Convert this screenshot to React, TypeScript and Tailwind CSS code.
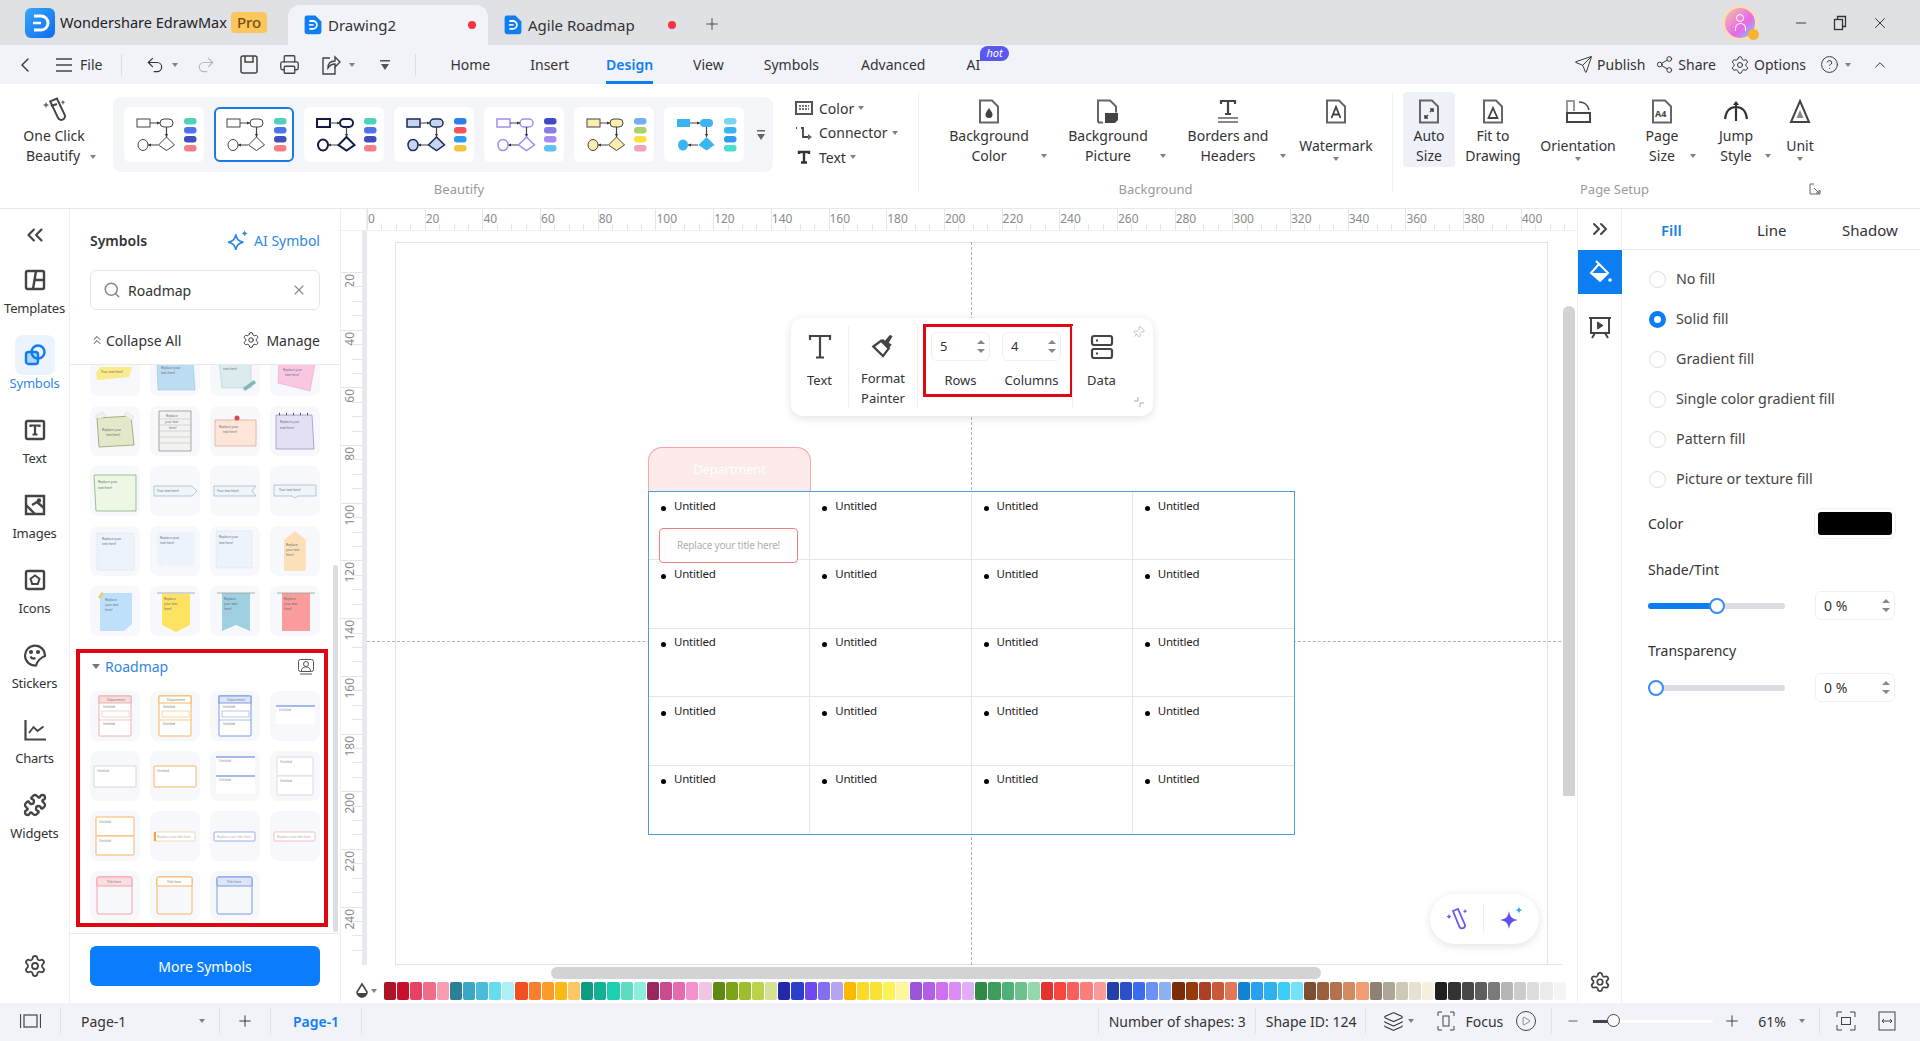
import type { ReactNode } from 'react';
import {
  ChevronLeft, ChevronUp, ChevronsLeft, ChevronsRight, Undo2, Redo2, Printer, Send, Share2,
  Settings, CircleHelp, Search, X, Minus, Plus, Pin, Layers, Play, Puzzle, ChevronsUp,
} from 'lucide-react';

const Caret = ({ className = '' }: { className?: string }) => (
  <span className={`inline-block w-0 h-0 border-x-[3.5px] border-x-transparent border-t-[4px] border-t-[#808080] ${className}`} />
);

const AppLogo = () => (
  <svg width="30" height="30" viewBox="0 0 30 30">
    <defs>
      <linearGradient id="lg" x1="0" y1="0" x2="1" y2="1"><stop offset="0" stopColor="#39a7f8" /><stop offset="1" stopColor="#0b6cf0" /></linearGradient>
    </defs>
    <rect width="30" height="30" rx="6" fill="url(#lg)" />
    <path d="M9 8h7a7 7 0 0 1 0 14H9" fill="none" stroke="#fff" strokeWidth="3" />
    <path d="M8 15h8" stroke="#fff" strokeWidth="2.500" />
  </svg>
);

const Logo = ({ size }: { size: number }) => (
  <svg width={size} height={size * 1.1} viewBox="0 0 30 33">
    <path d="M5 1h14l10 10v17a4 4 0 0 1-4 4H5a4 4 0 0 1-4-4V5a4 4 0 0 1 4-4z" fill="#0d7df2" />
    <path d="M9 10h6a6.500 6.500 0 0 1 0 13H9" fill="none" stroke="#fff" strokeWidth="3" />
    <path d="M8 16.500h8" stroke="#fff" strokeWidth="2.500" />
  </svg>
);

// flowchart thumbnails of the Beautify gallery
const flows = [
  { s: '#444', w: 1, f: 'none', c: ['#4fd1bc', '#4d74ee', '#3f4fc0', '#f77f84'] },
  { s: '#444', w: 1, f: 'none', c: ['#4fd1bc', '#4d74ee', '#3f4fc0', '#f77f84'], active: true },
  { s: '#111b46', w: 2, f: 'none', c: ['#4fd1bc', '#4d74ee', '#3f4fc0', '#f77f84'] },
  { s: '#1d2a4d', w: 1.500, f: '#c5d6f3', c: ['#2f7bf0', '#f4535a', '#2a9bf2', '#f9c23c'] },
  { s: '#a58bf2', w: 1.500, f: 'none', c: ['#4148c8', '#8b7de8', '#a98af2', '#5cc2f2'] },
  { s: '#444', w: 1, f: '#fdeeb0', c: ['#74aef2', '#a8d468', '#fbe23a', '#f0a2c0'] },
  { s: 'none', w: 1, f: '#3ab4f2', c: ['#7bd3f5', '#39b4f2', '#2f9df0', '#4adcd0'] },
];

const FlowThumb = ({ s, w, f, c, active }: { s: string; w: number; f: string; c: string[]; active?: boolean }) => (
  <div className={`w-20 h-[55px] rounded-md bg-white ${active ? 'border-2 border-[#1b7be0]' : ''}`}>
    <svg width="80" height="55" viewBox="0 0 80 55" className={active ? '-m-[2px]' : ''}>
      <rect x="13" y="12" width="13" height="8" fill={f} stroke={s} strokeWidth={w} />
      <rect x="36" y="12" width="13" height="8" rx="4" fill={f} stroke={s} strokeWidth={w} />
      <path d="M26 16h10M42.500 20v10M34 38H24" stroke="#444" strokeWidth="1.200" />
      <path d="M33 14.500l3 1.500-3 1.500zM41 27h3l-1.500 3zM27 36.500l-3 1.500 3 1.500z" fill="#333" />
      <path d="M42.500 30l8 8-8 5.500-8-5.500z" fill={f} stroke={s} strokeWidth={w} />
      <ellipse cx="19" cy="38" rx="5" ry="5.500" fill={f} stroke={s} strokeWidth={w} />
      {c.map((col, i) => (
        <rect key={i} x="60" y={11 + i * 9} width="12.500" height="6.500" rx="3" fill={col} />
      ))}
    </svg>
  </div>
);

const Page = ({ children }: { children?: ReactNode }) => (
  <svg width="22" height="25" viewBox="0 0 22 25" fill="none">
    <path d="M2 1.500h12l6 6v16H2z" stroke="#666" strokeWidth="2" />
    {children}
  </svg>
);

const ribbonIcons: Record<string, ReactNode> = {
  bgColor: <Page><path d="M11 9c2 3 3.500 4.500 3.500 6.500a3.500 3.500 0 0 1-7 0C7.500 13.500 9 12 11 9z" fill="#444" /></Page>,
  bgPicture: (
    <svg width="24" height="25" viewBox="0 0 24 25" fill="none">
      <path d="M2 23.500V1.500h12l6 6v6" stroke="#666" strokeWidth="2" /><path d="M2 23.500h5" stroke="#666" strokeWidth="2" />
      <path d="M9 14h13v7l-3 3H9z" fill="#444" />
    </svg>
  ),
  borders: (
    <svg width="24" height="25" viewBox="0 0 24 25" fill="none">
      <path d="M5 5V2h14v3M12 2v13M9 15h6" stroke="#444" strokeWidth="2.200" />
      <path d="M2 19h20M2 23h20" stroke="#888" strokeWidth="2" />
    </svg>
  ),
  watermark: <Page><path d="M6.500 19L11 8l4.500 11M8 15.500h6" stroke="#444" strokeWidth="1.800" /></Page>,
  auto: <Page><path d="M12 10h3v3M12 13l3-3M10 19H7v-3M10 16l-3 3" stroke="#444" strokeWidth="1.600" /></Page>,
  fit: <Page><path d="M11 9l4.500 10h-9z" stroke="#444" strokeWidth="1.800" /></Page>,
  orient: (
    <svg width="28" height="25" viewBox="0 0 28 25" fill="none">
      <path d="M3 23V2h7v10" stroke="#999" strokeWidth="2" /><rect x="3" y="14" width="23" height="9" stroke="#444" strokeWidth="2" />
      <path d="M15 3c5 0 9 3 10 8" stroke="#444" strokeWidth="1.600" />
    </svg>
  ),
  size: <Page><text x="4" y="18" fontSize="9" fontWeight="700" fill="#444" fontFamily="Noto Sans">A4</text></Page>,
  jump: (
    <svg width="28" height="25" viewBox="0 0 28 25" fill="none">
      <path d="M3 20c1-8 5-12 11-12s10 4 11 12" stroke="#333" strokeWidth="2.200" /><path d="M14 3v19" stroke="#333" strokeWidth="2.200" />
      <path d="M11 6l3-4 3 4z" fill="#333" />
    </svg>
  ),
  unit: (
    <svg width="24" height="25" viewBox="0 0 24 25" fill="none">
      <path d="M12 2l9 21H3z" stroke="#444" strokeWidth="2" /><path d="M12 11l3.500 8h-7z" fill="#888" />
    </svg>
  ),
};

const RibbonBtn = ({ icon, lines, w, dd, side, cls = '' }: { icon: string; lines: string[]; w: number; dd?: boolean; side?: boolean; cls?: string }) => (
  <div className={`flex shrink-0 ${cls}`}>
    <div className="flex flex-col items-center" style={{ width: w }}>
      <div className="h-[25px] mt-[7px] mb-[1px] flex items-center">{ribbonIcons[icon]}</div>
      {lines.length === 2 ? (
        <div className="text-center leading-[20px] mt-[1px]">{lines[0]}<br />{lines[1]}</div>
      ) : (
        <div className="text-center leading-[20px] mt-[11px]">{lines[0]}</div>
      )}
      {dd && <Caret className="mt-[1px]" />}
    </div>
    {side && <div className="w-[20px] flex justify-center pt-[62px]"><Caret /></div>}
  </div>
);

const RailIcon = ({ name }: { name: string }) => {
  const c = '#444';
  if (name === 'Templates')
    return (
      <svg width="22" height="22" viewBox="0 0 22 22" fill="none" stroke={c} strokeWidth="2.400">
        <rect x="2" y="2" width="18" height="18" rx="1.500" /><path d="M12 2l-3 18M10.500 11H20" />
      </svg>
    );
  if (name === 'Symbols')
    return (
      <svg width="22" height="22" viewBox="0 0 22 22" fill="none" stroke="#0d7df2" strokeWidth="2.400">
        <circle cx="14" cy="8" r="6.500" /><rect x="2" y="8" width="12" height="12" rx="2.500" fill="#0d7df2" fillOpacity="0.250" />
      </svg>
    );
  if (name === 'Text')
    return (
      <svg width="22" height="22" viewBox="0 0 22 22" fill="none" stroke={c}>
        <rect x="2" y="2" width="18" height="18" rx="1.500" strokeWidth="2.400" /><path d="M6.500 8V6.500h9V8M11 6.500V15M8.500 15.500h5" strokeWidth="2.200" />
      </svg>
    );
  if (name === 'Images')
    return (
      <svg width="22" height="22" viewBox="0 0 22 22" fill="none" stroke={c} strokeWidth="2.400">
        <path d="M2 2h18v18H2z" /><path d="M2 11l9 9M8 11l5-3 7 6" /><circle cx="15" cy="6.500" r="1" fill={c} />
      </svg>
    );
  if (name === 'Icons')
    return (
      <svg width="22" height="22" viewBox="0 0 22 22" fill="none" stroke={c} strokeWidth="2.400">
        <rect x="2" y="2" width="18" height="18" rx="1.500" /><path d="M11 6.500l4.500 3.300-1.700 5.200H8.200L6.500 9.800z" strokeWidth="2" />
      </svg>
    );
  if (name === 'Stickers')
    return (
      <svg width="24" height="24" viewBox="0 0 24 24" fill="none" stroke={c} strokeWidth="2.200">
        <path d="M22 13a10 10 0 1 0-9 9.500c1-4 5-8 9-9.500z" /><path d="M7.500 13.500c1 2 3 2.500 5 1.500" /><circle cx="8" cy="9" r="1" fill={c} /><circle cx="15" cy="9" r="1" fill={c} />
      </svg>
    );
  if (name === 'Charts')
    return (
      <svg width="24" height="24" viewBox="0 0 24 24" fill="none" stroke={c} strokeWidth="2.200">
        <path d="M2.500 2v19.500H23" /><path d="M6 15l4.500-6 4 4 6-4.500" strokeWidth="1.800" />
      </svg>
    );
  return <Puzzle size={24} color={c} strokeWidth={2.300} />;
};

const rail = ['Templates', 'Symbols', 'Text', 'Images', 'Icons', 'Stickers', 'Charts', 'Widgets'];

// small sticky-note tiles in the symbols panel
const T = ({ x, y, s, f = '#5a6a7a' }: { x: number; y: number; s: string; f?: string }) => (
  <text x={x} y={y} fontSize="3.200" fill={f} fontFamily="Noto Sans">{s}</text>
);

const notes: ReactNode[] = [
  <g key="a"><path d="M6 27l4-6h32l-3 10-32 3z" fill="#fbe98a" /><T x={11} y={27} s="Your text here!" /></g>,
  <g key="b"><path d="M7 15h36l2 29H8z" fill="#bcdcf2" stroke="#8fbcd8" strokeWidth=".5" /><T x={11} y={23} s="Replace your" /><T x={11} y={28} s="text here!" /></g>,
  <g key="c"><path d="M9 15h32v27H12z" fill="#dcecee" stroke="#a8c8cc" strokeWidth=".5" /><T x={13} y={24} s="text here!" /><path d="M33 42l11-8 2 3-11 8z" fill="#7fb8bc" /></g>,
  <g key="d"><path d="M9 15l36 3-5 27-32-8z" fill="#fbc6e0" stroke="#e29cc4" strokeWidth=".5" /><T x={13} y={25} s="Replace your" /><T x={15} y={30} s="text here!" /></g>,
  <g key="e"><path d="M7 12l34-2 3 29-35 2z" fill="#e2e8c8" stroke="#8fa070" strokeWidth=".8" /><path d="M5 10l8-4 3 4-7 3zM37 6l7 5-3 3-7-5z" fill="#f2f2ea" stroke="#ccc" strokeWidth=".4" /><T x={12} y={25} s="Replace your" /><T x={16} y={30} s="text here!" /></g>,
  <g key="f"><path d="M9 5h32v40H9z" fill="#f2f2f0" stroke="#888" strokeWidth=".7" /><path d="M9 13h32M9 19h32M9 25h32M9 31h32M9 37h32" stroke="#aaa" strokeWidth=".4" /><T x={16} y={11} s="Replace" /><T x={15} y={17} s="your text" /><T x={19} y={23} s="here!" /></g>,
  <g key="g"><path d="M5 14h41v26H5z" fill="#fde6d8" stroke="#e4a088" strokeWidth=".7" /><circle cx="27" cy="12" r="2.500" fill="#d84a4a" /><T x={9} y={22} s="Replace your" /><T x={13} y={27} s="text here!" /></g>,
  <g key="h"><path d="M6 9h36l2 34H6z" fill="#e2e0f2" stroke="#9a98c0" strokeWidth=".8" /><path d="M9 8h1M16 8h1M23 8h1M30 8h1M37 8h1" stroke="#555" strokeWidth="2.400" /><T x={10} y={17} s="Replace your" /><T x={10} y={23} s="text here!" /></g>,
  <g key="i"><path d="M4 9h42v36H6z" fill="#edf7e4" stroke="#8aae78" strokeWidth=".8" /><T x={8} y={17} s="Replace your" /><T x={8} y={23} s="text here!" /></g>,
  <g key="j"><path d="M4 20h38l5 5-5 5H4z" fill="#f0f5fa" stroke="#9ab4c8" strokeWidth=".7" /><T x={7} y={26} s="Your text here!" /></g>,
  <g key="k"><path d="M4 20h42l-4 5 4 5H4z" fill="#f0f5fa" stroke="#9ab4c8" strokeWidth=".7" /><T x={7} y={26} s="Your text here!" /></g>,
  <g key="l"><path d="M4 19h42v11H28l-3 2-3-2H4z" fill="#f0f5fa" stroke="#9ab4c8" strokeWidth=".7" /><T x={9} y={25} s="Your text here!" /></g>,
  <g key="m"><path d="M7 7h37v37H7z" fill="#edf3fb" stroke="#b8c8dc" strokeWidth=".5" strokeDasharray="1 1" /><T x={12} y={14} s="Replace your" /><T x={12} y={19} s="text here!" /></g>,
  <g key="n"><path d="M7 6h38v35l-10-2-8 1-10-2-10 3z" fill="#edf3fb" /><T x={10} y={13} s="Replace your" /><T x={10} y={18} s="text here!" /></g>,
  <g key="o"><path d="M6 5h36v37H6z" fill="#edf3fb" stroke="#c0cfe0" strokeWidth=".5" strokeDasharray="1 1" /><T x={9} y={12} s="Replace your" /><T x={9} y={18} s="text here!" /></g>,
  <g key="p"><path d="M14 14l11-9 11 9v29a2 2 0 0 1-2 2H16a2 2 0 0 1-2-2z" fill="#fde0b8" /><T x={16} y={20} s="Replace" /><T x={16} y={25} s="your text" /><T x={16} y={30} s="here!" /></g>,
  <g key="q"><path d="M10 7h32v31l-8 7H10z" fill="#bfe0fa" /><path d="M8 11l4-5 2 2-4 5z" fill="#e8d070" /><T x={15} y={15} s="Replace" /><T x={15} y={20} s="your text" /><T x={15} y={25} s="here!" /></g>,
  <g key="r"><path d="M12 8h28v31l-14 7-14-7z" fill="#fde35f" /><path d="M7 7h38" stroke="#999" strokeWidth=".8" /><T x={14} y={14} s="Replace" /><T x={14} y={19} s="your text" /><T x={14} y={24} s="here!" /></g>,
  <g key="s"><path d="M12 7h28v38l-14-6-14 6z" fill="#9fd0e0" /><path d="M7 7h38" stroke="#999" strokeWidth=".8" /><T x={14} y={14} s="Replace" /><T x={14} y={19} s="your text" /><T x={14} y={24} s="here!" /></g>,
  <g key="t"><path d="M12 7h28v38H12z" fill="#fb9c9c" /><path d="M7 7h38" stroke="#999" strokeWidth=".8" /><T x={14} y={14} s="Replace" /><T x={14} y={19} s="your text" /><T x={14} y={24} s="here!" /></g>,
];

const Frame3 = ({ c, head }: { c: string; head: string }) => (
  <g>
    <rect x="9" y="5" width="32" height="40" rx="1" fill="#fff" stroke={c} strokeWidth=".9" />
    <rect x="9" y="5" width="32" height="7" fill={head} stroke={c} strokeWidth=".9" />
    <T x={17} y={10} s="Department" f="#777" />
    <path d="M9 29h32" stroke={c} strokeWidth=".6" />
    <T x={13} y={17} s="Untitled" f="#777" />
    <rect x="12" y="20" width="27" height="6" fill="#fff" stroke={c} strokeWidth=".5" />
    <T x={13} y={34} s="Untitled" f="#777" />
  </g>
);
const Box = ({ c, y = 15, h = 21, x = 4, w = 42 }: { c: string; y?: number; h?: number; x?: number; w?: number }) => (
  <g><rect x={x} y={y} width={w} height={h} rx=".8" fill="#fff" stroke={c} strokeWidth=".9" /><T x={x + 3} y={y + 6} s="Untitled" f="#888" /></g>
);
const LineBox = ({ y }: { y: number }) => (
  <g><rect x="6" y={y} width="39" height="18" fill="#fff" /><path d={`M6 ${y}h39`} stroke="#4f78de" strokeWidth="1.200" /><T x={9} y={y + 5} s="Untitled" f="#88a" /></g>
);
const Bar = ({ c, tag }: { c: string; tag?: boolean }) => (
  <g>
    <rect x="4" y="21" width="41" height="9" rx="1" fill="#fff" stroke={c} strokeWidth=".7" />
    {tag && <rect x="4" y="21" width="2" height="9" fill="#f8a53a" />}
    <T x={7} y={27} s="Replace your title here" f="#aaa" />
  </g>
);
const Tab = ({ c, head, x = 7, w = 35 }: { c: string; head: string; x?: number; w?: number }) => (
  <g>
    <rect x={x} y="6" width={w} height="37" rx="2" fill="#f7f8fb" stroke={c} strokeWidth=".9" />
    <rect x={x} y="6" width={w} height="9" rx="1" fill={head} stroke={c} strokeWidth=".9" />
    <T x={x + 10} y={12} s="Title here" f="#777" />
  </g>
);

const roadmaps: (ReactNode | null)[] = [
  <Frame3 key="0" c="#e8a8a8" head="#fbdcdc" />,
  <Frame3 key="1" c="#f6ae50" head="#fff" />,
  <Frame3 key="2" c="#6e90e4" head="#dce5fa" />,
  <LineBox key="3" y={15} />,
  <Box key="4" c="#d4d4d4" />,
  <Box key="5" c="#f6ae50" />,
  <g key="6"><LineBox y={6} /><LineBox y={25} /></g>,
  <g key="7"><Box c="#d8d8d8" x={7} w={36} y={6} h={19} /><Box c="#d8d8d8" x={7} w={36} y={25} h={19} /></g>,
  <g key="8"><Box c="#f6ae50" x={6} w={38} y={6} h={19} /><Box c="#f6ae50" x={6} w={38} y={25} h={19} /></g>,
  <Bar key="9" c="#f0c890" tag />,
  <Bar key="10" c="#6e90e4" />,
  <Bar key="11" c="#f2a8a8" />,
  <Tab key="12" c="#f49aa4" head="#fddde0" />,
  <Tab key="13" c="#f6ae50" head="#fff" />,
  <Tab key="14" c="#6e90e4" head="#dce5fa" />,
  null,
];

const Tile = ({ children }: { children: ReactNode }) =>
  children ? (
    <div className="w-[50px] h-[50px] rounded-lg bg-[#f6f8fb]">
      <svg width="50" height="50" viewBox="0 0 50 50">{children}</svg>
    </div>
  ) : <div className="w-[50px] h-[50px]" />;

const swatches = [
  '#ab1527', '#c8102e', '#e64364', '#ee6e8a', '#f79eb0', '#2b7f97', '#3aa6c3', '#4bbcd8', '#66dcef', '#aeeef7',
  '#f04e23', '#f97e2e', '#fb9a2d', '#fdb913', '#fcc662', '#0f9b82', '#13b196', '#1ccfae', '#5cdcc0', '#8beedd',
  '#9a2860', '#c84b8e', '#e66ab0', '#f68fcd', '#f2c6e2', '#5f8a12', '#7ea31b', '#9cbe2a', '#b9d34a', '#d5e293',
  '#2329a9', '#2c3fcc', '#6d49ef', '#8270ee', '#b5a5f0', '#fdb900', '#fadc28', '#f9e135', '#fbf253', '#fcf79f',
  '#9c54d8', '#b45de8', '#d06ff0', '#dc8cf5', '#e0aef5', '#2f8a48', '#3d9e5c', '#4fb177', '#6cc18c', '#93d9ac',
  '#e4322f', '#f5473f', '#f7605c', '#fa7e7b', '#fb9a96', '#2340a8', '#2d50c6', '#3a6cf0', '#6b92f2', '#8db0f0',
  '#7a2d08', '#953a0a', '#ab4026', '#c85a3a', '#e07958', '#1283d4', '#279ff2', '#2eb1ed', '#3ccdfb', '#72e2f5',
  '#7c4e32', '#98603f', '#b5714f', '#d28a60', '#f29d71', '#8d8275', '#ada695', '#cdc9b6', '#e7e2d0', '#f7f0e1',
  '#1f1f1f', '#333333', '#484848', '#5f5f5f', '#7a7a7a', '#b5b5b5', '#cccccc', '#dcdcdc', '#ebebeb', '#f5f5f5',
];

const hTicks = Array.from({ length: 21 }, (_, i) => i * 20);
const vTicks = Array.from({ length: 12 }, (_, i) => (i + 1) * 20);

const Spin = () => (
  <div className="flex flex-col gap-[5px] items-center">
    <span className="w-0 h-0 border-x-[4px] border-x-transparent border-b-[4px] border-b-[#888]" />
    <span className="w-0 h-0 border-x-[4px] border-x-transparent border-t-[4px] border-t-[#888]" />
  </div>
);

const NumberBox = ({ v, cls }: { v: string; cls: string }) => (
  <div className={`flex items-center justify-between border border-[#eeeff3] rounded-md pl-2 pr-[4px] bg-white ${cls}`}>
    <span>{v}</span><Spin />
  </div>
);

const Slider = ({ pct, filled }: { pct: number; filled: boolean }) => (
  <div className="relative w-[137px] h-[6px] rounded-full bg-[#dcdde0]">
    {filled && <div className="absolute left-0 top-0 h-[6px] rounded-full bg-[#0d7df2]" style={{ width: `${pct}%` }} />}
    <span className="absolute top-[-5px] w-4 h-4 rounded-full bg-white border-2 border-[#3b8cf0]" style={{ left: `calc(${pct}% - 8px)` }} />
  </div>
);

export default function App() {
  return (
    <div className="w-[1920px] h-[1041px] flex flex-col overflow-hidden bg-white text-[14px] text-[#333] font-['Noto_Sans',sans-serif]">
      {/* title bar */}
      <div className="h-[45px] shrink-0 bg-[#dfe1e5] flex items-end relative text-[15px]">
        <div className="w-[288px] h-[45px] pl-[25px] flex items-center">
          <AppLogo />
          <span className="ml-[5px] text-[14.500px] text-[#222] whitespace-nowrap">Wondershare EdrawMax</span>
          <span className="ml-[4px] px-[6px] h-[21px] leading-[20px] rounded bg-[#fbc65b] text-[#7a4f10] font-medium">Pro</span>
        </div>
        <div className="w-[200px] h-[40px] bg-[#f1f3f9] rounded-t-xl flex items-center pl-4 pr-[12px]">
          <Logo size={18} />
          <span className="ml-[6px] flex-1">Drawing2</span>
          <span className="w-2 h-2 rounded-full bg-[#f4333e]" />
        </div>
        <div className="w-[200px] h-[40px] flex items-center pl-4 pr-[12px]">
          <Logo size={18} />
          <span className="ml-[6px] flex-1">Agile Roadmap</span>
          <span className="w-2 h-2 rounded-full bg-[#f4333e]" />
        </div>
        <Plus size={18} strokeWidth={1.300} className="mb-[12px] ml-[15px] text-[#444]" />
        <div className="ml-auto flex items-center h-[45px] pr-[31px] gap-[23px]">
          <div className="w-[36px] h-[36px] rounded-full bg-[#f9dcb9] p-[3px] relative mr-[12px]">
            <div className="w-full h-full rounded-full bg-[linear-gradient(135deg,#f2c4a8,#e868e8_60%,#6fd8e8)] flex flex-col items-center pt-[6px]">
              <span className="w-[8px] h-[8px] rounded-full border border-white" />
              <span className="mt-[1px] w-[11px] h-[8px] rounded-t-md border border-b-0 border-white" />
            </div>
            <span className="absolute right-[-1px] bottom-[1px] w-[11px] h-[11px] rounded-full bg-[#f5b52e]" />
          </div>
          <Minus size={16} strokeWidth={1.400} />
          <svg width="16" height="16" viewBox="0 0 16 16" fill="none" stroke="#333" strokeWidth="1.300">
            <rect x="2.500" y="4.500" width="8" height="10" /><path d="M5.500 4.500v-3h8v10h-3" />
          </svg>
          <X size={18} strokeWidth={1.300} />
        </div>
      </div>

      {/* menu bar */}
      <div className="h-[39px] shrink-0 bg-[#f1f3f9] flex items-center">
        <ChevronLeft size={24} strokeWidth={1.400} className="ml-[13px]" />
        <svg width="16" height="14" viewBox="0 0 16 14" className="ml-[19px]" stroke="#444" strokeWidth="1.300"><path d="M0 1h16M0 7h16M0 13h16" /></svg>
        <span className="ml-[8px]">File</span>
        <span className="ml-[19px] w-px h-[22px] bg-[#dcdee4]" />
        <Undo2 size={20} strokeWidth={1.400} className="ml-[23px]" />
        <Caret className="ml-[7px]" />
        <Redo2 size={20} strokeWidth={1.400} className="ml-[18px] text-[#b8b8b8]" />
        <svg width="18" height="19" viewBox="0 0 18 19" fill="none" stroke="#444" strokeWidth="1.500" className="ml-[24px]">
          <rect x="1" y="1" width="16" height="17" rx="2" /><path d="M5 1v6h8V1" />
        </svg>
        <Printer size={21} strokeWidth={1.500} className="ml-[21px] text-[#444]" />
        <svg width="19" height="20" viewBox="0 0 19 20" fill="none" stroke="#444" strokeWidth="1.400" className="ml-[22px]">
          <path d="M8 3H1v16h12v-7" /><path d="M6 13c0-5 3-7 7-7V2l5 5-5 5V9c-3 0-5 1-7 4z" />
        </svg>
        <Caret className="ml-[8px]" />
        <svg width="12" height="14" viewBox="0 0 12 14" fill="#555" className="ml-[24px]"><path d="M1 2h10v1.500H1zM2 6h8l-4 6z" /></svg>
        <span className="ml-[24px] w-px h-[22px] bg-[#dcdee4]" />
        <span className="ml-[34px]">Home</span>
        <span className="ml-[40px]">Insert</span>
        <div className="ml-[37px] h-[39px] relative flex items-center font-semibold text-[#0d7df2]">
          Design
          <span className="absolute left-0 right-0 bottom-0 h-[3px] bg-[#0d7df2]" />
        </div>
        <span className="ml-[40px]">View</span>
        <span className="ml-[40px]">Symbols</span>
        <span className="ml-[42px]">Advanced</span>
        <div className="ml-[41px] relative">
          AI
          <span className="absolute left-[14px] top-[-8px] px-[6px] h-[15px] leading-[14px] rounded-t-lg rounded-br-lg bg-[#5a58f0] text-white text-[11px] italic">hot</span>
        </div>
        <div className="ml-auto flex items-center pr-[31px]">
          <Send size={19} strokeWidth={1.200} />
          <span className="ml-[4px]">Publish</span>
          <Share2 size={19} strokeWidth={1.200} className="ml-[10px]" />
          <span className="ml-[4px]">Share</span>
          <Settings size={20} strokeWidth={1.200} className="ml-[14px]" />
          <span className="ml-[4px]">Options</span>
          <CircleHelp size={19} strokeWidth={1.200} className="ml-[14px]" />
          <Caret className="ml-[6px]" />
          <ChevronUp size={18} strokeWidth={1.300} className="ml-[20px]" />
        </div>
      </div>

      {/* ribbon */}
      <div className="h-[125px] shrink-0 flex border-b border-[#e9e9ec]">
        <div className="w-[918px] flex flex-col">
          <div className="h-[97px] flex">
            <div className="w-[108px] flex flex-col items-center pt-[13px] mr-[5px]">
              <svg width="24" height="27" viewBox="0 0 24 27" fill="none">
                <path d="M9 4l7-2 6 17a3.500 3.500 0 0 1-7 2z" transform="rotate(-6 12 12)" stroke="#444" strokeWidth="2" />
                <path d="M9 9l6-2" stroke="#444" strokeWidth="2" />
                <path d="M4 5l1 2 2 1-2 1-1 2-1-2-2-1 2-1zM21 3l.8 1.500 1.500.8-1.500.8L21 8l-.8-1.900-1.500-.8 1.500-.8z" fill="#666" />
              </svg>
              <div className="text-center leading-[20px] mt-[2px]">One Click<br /><span className="pl-[14px]">Beautify</span><Caret className="ml-[10px] mb-[2px]" /></div>
            </div>
            <div className="mt-[13px] h-[75px] w-[660px] bg-[#f3f5f9] rounded-lg flex items-center pl-[11px] gap-[10px]">
              {flows.map((f, i) => <FlowThumb key={i} {...f} />)}
              <svg width="12" height="14" viewBox="0 0 12 14" fill="#666" className="ml-[1px]"><path d="M2 2h8v1.500H2zM2 6h8l-4 6z" /></svg>
            </div>
            <div className="ml-[22px] flex flex-col pt-[12px]">
              {[
                ['Color', <svg key="c" width="18" height="14" viewBox="0 0 18 14" fill="none"><rect x="1" y="1" width="16" height="12" stroke="#555" strokeWidth="2" /><path d="M4 5h10M4 8h10" stroke="#777" strokeWidth="2" strokeDasharray="2 1" /></svg>],
                ['Connector', <svg key="k" width="18" height="14" viewBox="0 0 18 14" fill="none"><path d="M1 2h1M6 2h2v9h5" stroke="#444" strokeWidth="1.800" /><path d="M13 8l4 3-4 3z" fill="#666" /></svg>],
                ['Text', <svg key="t" width="18" height="14" viewBox="0 0 18 14" fill="none"><path d="M4 4V2h10v2M9 2v10M6 12.500h6" stroke="#333" strokeWidth="2.400" /></svg>],
              ].map(([label, icon], i) => (
                <div key={i} className="flex items-center h-[24.500px]">
                  <span className="w-[24px] flex">{icon}</span>
                  <span>{label}</span>
                  <Caret className="ml-[4px]" />
                </div>
              ))}
            </div>
          </div>
          <div className="text-center text-[13px] text-[#9a9a9a] mt-[-1px]">Beautify</div>
        </div>
        <div className="w-px h-[100px] mt-[8px] bg-[#eef0f3]" />
        <div className="w-[473px] flex flex-col">
          <div className="h-[97px] flex pt-[8px] pl-[25px]">
            <RibbonBtn icon="bgColor" lines={['Background', 'Color']} w={90} side />
            <RibbonBtn icon="bgPicture" lines={['Background', 'Picture']} w={90} side cls="ml-[9px]" />
            <RibbonBtn icon="borders" lines={['Borders and', 'Headers']} w={90} side cls="ml-[10px]" />
            <RibbonBtn icon="watermark" lines={['Watermark']} w={80} dd cls="ml-[3px]" />
          </div>
          <div className="text-center text-[13px] text-[#9a9a9a] mt-[-1px]">Background</div>
        </div>
        <div className="w-px h-[100px] mt-[8px] bg-[#eef0f3]" />
        <div className="w-[443px] flex flex-col relative">
          <div className="h-[97px] flex pt-[8px] pl-[10px]">
            <div className="w-[52px] h-[75px] rounded bg-[#eef1f7]">
              <RibbonBtn icon="auto" lines={['Auto', 'Size']} w={52} />
            </div>
            <RibbonBtn icon="fit" lines={['Fit to', 'Drawing']} w={60} cls="ml-[8px]" />
            <RibbonBtn icon="orient" lines={['Orientation']} w={80} dd cls="ml-[15px]" />
            <div className="ml-[19px] flex">
              <RibbonBtn icon="size" lines={['Page', 'Size']} w={50} />
              <div className="w-[12px] pt-[62px] flex justify-center"><Caret /></div>
            </div>
            <div className="ml-[12px] flex">
              <RibbonBtn icon="jump" lines={['Jump', 'Style']} w={50} />
              <div className="w-[14px] pt-[62px] flex justify-center"><Caret /></div>
            </div>
            <RibbonBtn icon="unit" lines={['Unit']} w={40} dd cls="ml-[5px]" />
          </div>
          <div className="text-center text-[13px] text-[#9a9a9a] mt-[-1px]">Page Setup</div>
          <svg width="12" height="12" viewBox="0 0 12 12" fill="none" stroke="#666" className="absolute left-[416px] top-[99px]"><path d="M5 1H1v10h10V7" /><path d="M5 5l5 5M7 10h3V7" /></svg>
        </div>
      </div>

      {/* body */}
      <div className="flex-1 flex min-h-0">
        {/* icon rail */}
        <div className="w-[70px] shrink-0 border-r border-[#eeeff2] flex flex-col items-center">
          <ChevronsLeft size={26} strokeWidth={2} className="mt-[13px] mb-[11px] text-[#444]" />
          {rail.map(n => (
            <div key={n} className="h-[75px] w-full flex flex-col items-center">
              <div className={`w-10 h-10 mt-[1px] rounded-lg flex items-center justify-center ${n === 'Symbols' ? 'bg-[#eaf3fe]' : ''}`}><RailIcon name={n} /></div>
              <span className={`text-[13px] leading-[18px] mt-[-1px] tracking-[-0.2px] ${n === 'Symbols' ? 'text-[#2f87e8]' : ''}`}>{n}</span>
            </div>
          ))}
          <Settings size={24} strokeWidth={1.800} className="mt-auto mb-[25px] text-[#444]" />
        </div>

        {/* symbols panel */}
        <div className="w-[271px] shrink-0 border-r border-[#eeeff2] flex flex-col">
          <div className="h-[156px] shrink-0 border-b border-[#e9e9ec] px-5">
            <div className="flex items-center justify-between h-[40px] mt-[11px]">
              <span className="font-semibold">Symbols</span>
              <span className="flex items-center gap-[5px] text-[#2f87e8]">
                <svg width="22" height="22" viewBox="0 0 20 20" fill="none"><path d="M8 5c.8 4.500 2.500 6 7 7-4.500 1-6.200 2.500-7 7-.8-4.500-2.500-6-7-7 4.500-1 6.200-2.500 7-7z" stroke="#2f87e8" strokeWidth="1.500" /><path d="M16 1c.3 2 1 2.700 3 3-2 .3-2.700 1-3 3-.3-2-1-2.700-3-3 2-.3 2.700-1 3-3z" fill="#2f87e8" /></svg>
                AI Symbol
              </span>
            </div>
            <div className="h-[40px] mt-[10px] border border-[#e7e7ea] rounded-md flex items-center pl-[12px] pr-[12px]">
              <Search size={18} strokeWidth={2} className="text-[#888]" />
              <span className="ml-[7px] flex-1">Roadmap</span>
              <X size={16} strokeWidth={1.600} className="text-[#888]" />
            </div>
            <div className="flex items-center justify-between h-[20px] mt-[20px]">
              <span className="flex items-center gap-[2px]"><ChevronsUp size={14} strokeWidth={1.600} />Collapse All</span>
              <span className="flex items-center gap-[6px]"><Settings size={18} strokeWidth={1.300} />Manage</span>
            </div>
          </div>
          <div className="flex-1 relative overflow-hidden min-h-0">
            <div className="mt-[-19px] ml-5 grid grid-cols-[repeat(4,50px)] gap-[10px]">
              {notes.map((n, i) => <Tile key={i}>{n}</Tile>)}
            </div>
            <div className="ml-[6px] mt-[13px] w-[252px] h-[278px] border-[4px] border-[#e00612] px-[10px]">
              <div className="h-[34px] flex items-center pb-[7px]">
                <span className="ml-[2px] w-0 h-0 border-x-[4px] border-x-transparent border-t-[5px] border-t-[#777]" />
                <span className="ml-[5px] text-[#2f87e8] flex-1">Roadmap</span>
                <svg width="16" height="16" viewBox="0 0 16 16" fill="none" stroke="#555"><rect x=".5" y=".5" width="15" height="12" rx="2" /><circle cx="8" cy="5" r="2.500" /><path d="M3.500 12c0-3 2-4 4.500-4s4.500 1 4.500 4M2 15h12" /></svg>
              </div>
              <div className="grid grid-cols-[repeat(4,50px)] gap-[10px] mt-[4px]">
                {roadmaps.map((r, i) => <Tile key={i}>{r}</Tile>)}
              </div>
            </div>
            <div className="absolute right-[2px] top-[200px] bottom-[1px] w-[5px] rounded-full bg-[#dcdde0]" />
          </div>
          <div className="h-[70px] shrink-0 border-t border-[#e9e9ec] px-5 pt-[12px]">
            <div className="h-10 rounded-md bg-[#0a7dfc] text-white flex items-center justify-center">More Symbols</div>
          </div>
        </div>

        {/* canvas column */}
        <div className="w-[1236px] shrink-0 flex flex-col">
          <div className="h-[22px] shrink-0 flex border-b border-[#eeeff2]">
            <div className="w-[26px] shrink-0 border-r border-[#eeeff2]" />
            {hTicks.map(t => (
              <div key={t} className="w-[57.700px] shrink-0 relative border-l border-[#e4e5ea] text-[12px] leading-[20px] text-[#8a8a8a]">
                {t}
                <div className="absolute left-0 right-0 bottom-0 flex h-[6px]">
                  <span className="flex-1" /><span className="flex-1 border-l border-[#e4e5ea]" /><span className="flex-1 border-l border-[#e4e5ea]" /><span className="flex-1 border-l border-[#e4e5ea]" />
                </div>
              </div>
            ))}
          </div>
          <div className="flex-1 flex min-h-0">
            <div className="w-[26px] shrink-0 border-r-[5px] border-[#e8e9ef] overflow-hidden">
              <div className="h-[41px]" />
              {vTicks.map(t => (
                <div key={t} className="h-[57.700px] relative border-t border-[#e4e5ea] w-full">
                  <span className="absolute left-[2px] top-[1px] text-[12px] leading-[13px] text-[#8a8a8a] [writing-mode:vertical-rl] rotate-180">{t}</span>
                  <div className="absolute right-0 top-0 bottom-0 flex flex-col w-[10px]">
                    <span className="flex-1" /><span className="flex-1 border-t border-[#e4e5ea]" /><span className="flex-1 border-t border-[#e4e5ea]" /><span className="flex-1 border-t border-[#e4e5ea]" />
                  </div>
                </div>
              ))}
            </div>
            <div className="flex-1 relative overflow-hidden text-[11.500px] tracking-[-0.2px]">
              {/* page sheet */}
              <div className="absolute left-[28px] top-[11px] w-[1153px] bottom-0 border-x border-t border-[#e3e3e6]" />
              <div className="absolute left-[28px] right-[15px] bottom-0 h-px bg-[#e3e3e6]" />
              {/* guides */}
              <div className="absolute left-[604px] top-[11px] bottom-0 border-l border-dashed border-[#b0b0b0]" />
              <div className="absolute left-0 right-[16px] top-[410px] border-t border-dashed border-[#b0b0b0]" />

              <div className="absolute left-[281px] top-[216px] w-[163px] h-[45px] rounded-t-[14px] bg-[#fdeaea] border border-b-0 border-[#f4a6a6] flex items-center justify-center text-white text-[13px]">Department</div>
              <div className="absolute left-[281px] top-[260px] w-[647px] h-[344px] bg-white border border-[#4a9fd0] grid grid-cols-4 grid-rows-5">
                {Array.from({ length: 20 }).map((_, i) => (
                  <div key={i} className={`border-[#e6e6e6] pl-[12px] pt-[4.500px] flex items-start ${i % 4 < 3 ? 'border-r' : ''} ${i < 16 ? 'border-b' : ''}`}>
                    <span className="w-[5px] h-[5px] rounded-full bg-black mt-[9px] mr-[8px]" />
                    <span className="leading-[18px] text-[#222]">Untitled</span>
                  </div>
                ))}
              </div>
              <div className="absolute left-[292px] top-[297px] w-[139px] h-[35px] bg-white border border-[#ee7f7f] rounded-[4px] flex items-center justify-center text-[10px] text-[#b0b0b0]">Replace your title here!</div>

              {/* floating table toolbar */}
              <div className="absolute left-[424px] top-[87px] w-[362px] h-[98px] rounded-xl bg-white shadow-[0_2px_10px_rgba(0,0,0,0.12)] flex text-[13px] tracking-normal">
                <div className="w-[58px] my-2 border-r border-[#f0f0f2] flex flex-col items-center">
                  <svg width="24" height="26" viewBox="0 0 24 26" fill="none" stroke="#444" strokeWidth="2.200" className="mt-[8px]"><path d="M2 6V2h20v4M12 2v21M8 23.500h8" /></svg>
                  <span className="mt-[11px]">Text</span>
                </div>
                <div className="w-[69px] my-2 border-r border-[#f0f0f2] flex flex-col items-center">
                  <svg width="24" height="26" viewBox="0 0 24 26" fill="none" className="mt-[8px]"><path d="M2 13l8-6 8 8-6 8z" stroke="#444" strokeWidth="2.400" /><path d="M10 7l8 8 3-4-3-2 4-7-3-1-5 6-2-2z" fill="#444" /></svg>
                  <span className="mt-[10px] text-center leading-[19.500px]">Format<br />Painter</span>
                </div>
                <div className="w-[154px] pl-[5px] pt-[6px]">
                  <div className="w-[150px] h-[73px] border-[3px] border-[#e00612] pl-[5px] pr-[9px] pt-[5px]">
                    <div className="flex gap-[12px]">
                      <NumberBox v="5" cls="w-[59px] h-[29px]" />
                      <NumberBox v="4" cls="w-[59px] h-[29px]" />
                    </div>
                    <div className="flex gap-[12px] mt-[10px]">
                      <span className="w-[59px] text-center">Rows</span>
                      <span className="w-[59px] text-center">Columns</span>
                    </div>
                  </div>
                </div>
                <div className="w-[58px] my-2 flex flex-col items-center border-l border-[#f0f0f2]">
                  <svg width="24" height="26" viewBox="0 0 24 26" fill="none" stroke="#444" strokeWidth="2.200" className="mt-[8px]"><rect x="2" y="2" width="20" height="9" rx="2" /><rect x="2" y="15" width="20" height="9" rx="2" /><path d="M6 6.500h2M6 19.500h2" /></svg>
                  <span className="mt-[11px]">Data</span>
                </div>
                <div className="flex-1 flex flex-col items-center justify-between py-[8px] pr-[6px]">
                  <Pin size={13} strokeWidth={1.300} className="rotate-45 text-[#aaa]" />
                  <svg width="12" height="12" viewBox="0 0 12 12" fill="none" stroke="#aaa"><path d="M5 1v4H1M7 11V7h4" /></svg>
                </div>
              </div>

              {/* AI pill */}
              <div className="absolute left-[1063px] top-[663px] w-[109px] h-[50px] rounded-full bg-white shadow-[0_2px_10px_rgba(0,0,0,0.12)] flex items-center justify-center gap-[14px]">
                <svg width="24" height="26" viewBox="0 0 24 26" fill="none"><path d="M8 5l5-2 7 16a3 3 0 0 1-5.500 2z" stroke="#6a5af0" strokeWidth="1.800" /><path d="M4 8l.8 1.800 1.800.8-1.800.8L4 13.200l-.8-1.800-1.800-.8 1.800-.8zM20 3l.7 1.500 1.500.7-1.500.7L20 7.500l-.7-1.500-1.500-.7 1.500-.7z" fill="#6a5af0" /></svg>
                <span className="w-px h-[28px] bg-[#eee]" />
                <svg width="26" height="28" viewBox="0 0 26 28"><path d="M11 6c1 6 3 8 9 9-6 1-8 3-9 9-1-6-3-8-9-9 6-1 8-3 9-9z" fill="#5f50ee" /><path d="M21 1c.4 3 1.200 3.800 4 4-2.800.4-3.600 1.200-4 4-.4-2.800-1.200-3.600-4-4 2.800-.2 3.600-1 4-4z" fill="#3f9cf2" /></svg>
              </div>
              {/* vertical scroll thumb */}
              <div className="absolute left-[1196px] top-[75px] h-[490px] w-[12px] rounded-t-full bg-[#d2d3d5]" />
            </div>
          </div>
          <div className="h-[17px] shrink-0 relative">
            <div className="absolute left-[210px] w-[770px] top-[2px] h-[12px] rounded-full bg-[#d2d3d5]" />
          </div>
          <div className="h-[21px] shrink-0 flex items-start pl-[14px]">
            <div className="w-[29px] flex items-center gap-[2px] h-[18px]">
              <svg width="14" height="18" viewBox="0 0 14 18" fill="none"><path d="M7 2l5 8a5 5 0 0 1-10 0z" stroke="#444" strokeWidth="1.600" /><path d="M2.500 11h9a4.500 4.500 0 0 1-9 0z" fill="#444" /></svg>
              <Caret />
            </div>
            <div className="w-[1181px] h-[18px] flex gap-px">
              {swatches.map((c, i) => (
                <span key={i} className="flex-1 rounded-[2px]" style={{ backgroundColor: c }} />
              ))}
            </div>
          </div>
        </div>

        {/* right strip */}
        <div className="w-[45px] shrink-0 border-x border-[#eeeff2] flex flex-col items-center">
          <ChevronsRight size={24} strokeWidth={2} className="mt-[8px] text-[#444]" />
          <div className="w-[44px] h-[44px] bg-[#0d7df2] mt-[9px] flex items-center justify-center">
            <svg width="26" height="26" viewBox="0 0 26 26" fill="none">
              <path d="M9 2l4 4" stroke="#fff" strokeWidth="2" /><path d="M12 5l9 9-8 8-9-8z" stroke="#fff" strokeWidth="2" />
              <path d="M4 14h17l-8 8z" fill="#fff" /><circle cx="23" cy="21" r="1.800" fill="#fff" />
            </svg>
          </div>
          <svg width="24" height="24" viewBox="0 0 24 24" fill="none" stroke="#444" strokeWidth="2" className="mt-[22px]">
            <path d="M1 2h22M3 2v15h18V2M7 17l-3 5M17 17l3 5" /><path d="M9.500 6v7l5.500-3.500z" fill="#444" strokeWidth="1" />
          </svg>
          <Settings size={22} strokeWidth={1.900} className="mt-auto mb-[10px] text-[#444]" />
        </div>

        {/* properties panel */}
        <div className="flex-1 min-w-0">
          <div className="h-[41px] border-b border-[#e9e9ec] relative flex items-center text-[15px] pt-[2px]">
            <span className="ml-[39px] font-semibold text-[#1a7fe8] w-[80px]">Fill</span>
            <span className="ml-[16px] w-[66px]">Line</span>
            <span className="ml-[19px]">Shadow</span>
          </div>
          <div className="pt-[9px] text-[14.300px]">
            {['No fill', 'Solid fill', 'Gradient fill', 'Single color gradient fill', 'Pattern fill', 'Picture or texture fill'].map((l, i) => (
              <div key={l} className="h-[40px] flex items-center pl-[27px] text-[#444]">
                {i === 1 ? (
                  <span className="w-[17px] h-[17px] rounded-full border-[5px] border-[#0d7df2] bg-white" />
                ) : (
                  <span className="w-[17px] h-[17px] rounded-full border border-[#dcdde0] bg-white" />
                )}
                <span className="ml-[10px]">{l}</span>
              </div>
            ))}
          </div>
          <div className="pl-[26px] pr-[25px] mt-[9px] flex items-center justify-between h-[30px]">
            <span>Color</span>
            <span className="w-[80px] h-[29px] rounded-md border-[3px] border-white bg-black outline outline-[#eeeff2]" />
          </div>
          <div className="pl-[26px] mt-[22px] leading-[20px]">Shade/Tint</div>
          <div className="pl-[26px] pr-[25px] mt-[11px] flex items-center justify-between">
            <Slider pct={50} filled />
            <NumberBox v="0 %" cls="w-[80px] h-[29px]" />
          </div>
          <div className="pl-[26px] mt-[21px] leading-[20px]">Transparency</div>
          <div className="pl-[26px] pr-[25px] mt-[12px] flex items-center justify-between">
            <Slider pct={6} filled={false} />
            <NumberBox v="0 %" cls="w-[80px] h-[29px]" />
          </div>
        </div>
      </div>

      {/* status bar */}
      <div className="h-[38px] shrink-0 bg-[#f1f3f9] flex items-center pb-[2px]">
        <div className="w-[61px] h-[26px] border-r border-[#e2e4ea] flex items-center justify-center">
          <svg width="21" height="14" viewBox="0 0 21 14" fill="none" stroke="#444" strokeWidth="1.200"><path d="M.5 0v14M20.500 0v14" /><rect x="4" y="1" width="13" height="12" /></svg>
        </div>
        <div className="w-[159px] h-[26px] border-r border-[#e2e4ea] flex items-center pl-[20px] pr-[14px] justify-between">
          Page-1 <Caret />
        </div>
        <div className="w-[51px] h-[26px] border-r border-[#e2e4ea] flex items-center justify-center"><Plus size={18} strokeWidth={1.300} /></div>
        <div className="w-[91px] h-[26px] border-r border-[#e2e4ea] flex items-center justify-center font-semibold text-[#0d7df2]">Page-1</div>
        <div className="ml-auto flex items-center pr-[24px]">
          <div className="h-[26px] border-l border-[#e2e4ea] pl-[10px] pr-[9px] flex items-center">Number of shapes: 3</div>
          <div className="h-[26px] border-l border-[#e2e4ea] pl-[10px] pr-[8px] flex items-center">Shape ID: 124</div>
          <div className="h-[26px] border-l border-[#e2e4ea] pl-[17px] pr-[15px] flex items-center gap-[4px]">
            <Layers size={21} strokeWidth={1.200} /><Caret />
            <svg width="18" height="20" viewBox="0 0 18 20" fill="none" stroke="#444" className="ml-[19px]"><path d="M5 1H1v4M13 1h4v4M5 19H1v-4M13 19h4v-4" /><rect x="6" y="5" width="6" height="10" /></svg>
            <span className="ml-[7px]">Focus</span>
            <span className="ml-[9px] w-[20px] h-[20px] rounded-full border border-[#444] flex items-center justify-center"><Play size={10} strokeWidth={1.300} /></span>
          </div>
          <div className="h-[26px] border-l border-[#e2e4ea] pl-[14px] flex items-center">
            <Minus size={14} strokeWidth={1.300} />
            <div className="ml-[13px] relative w-[120px] h-[3px] bg-white rounded">
              <div className="absolute left-0 top-0 h-[3px] w-[18px] bg-[#444]" />
              <span className="absolute left-[14px] top-[-6px] w-[13px] h-[13px] rounded-full bg-white border-[1.500px] border-[#444]" />
            </div>
            <Plus size={18} strokeWidth={1.200} className="ml-[10px]" />
            <span className="ml-[17px]">61%</span>
            <Caret className="ml-[13px]" />
          </div>
          <div className="ml-[14px] h-[26px] border-l border-[#e2e4ea] pl-[16px] flex items-center gap-[22px]">
            <svg width="20" height="20" viewBox="0 0 20 20" fill="none" stroke="#444"><path d="M6 1H1v5M14 1h5v5M6 19H1v-5M14 19h5v-5" /><rect x="5.500" y="6.500" width="9" height="7" /></svg>
            <svg width="18" height="20" viewBox="0 0 18 20" fill="none" stroke="#444"><rect x="1" y="1" width="16" height="18" /><path d="M4 10h10M6 8l-2 2 2 2M12 8l2 2-2 2" /></svg>
          </div>
        </div>
      </div>
    </div>
  );
}
